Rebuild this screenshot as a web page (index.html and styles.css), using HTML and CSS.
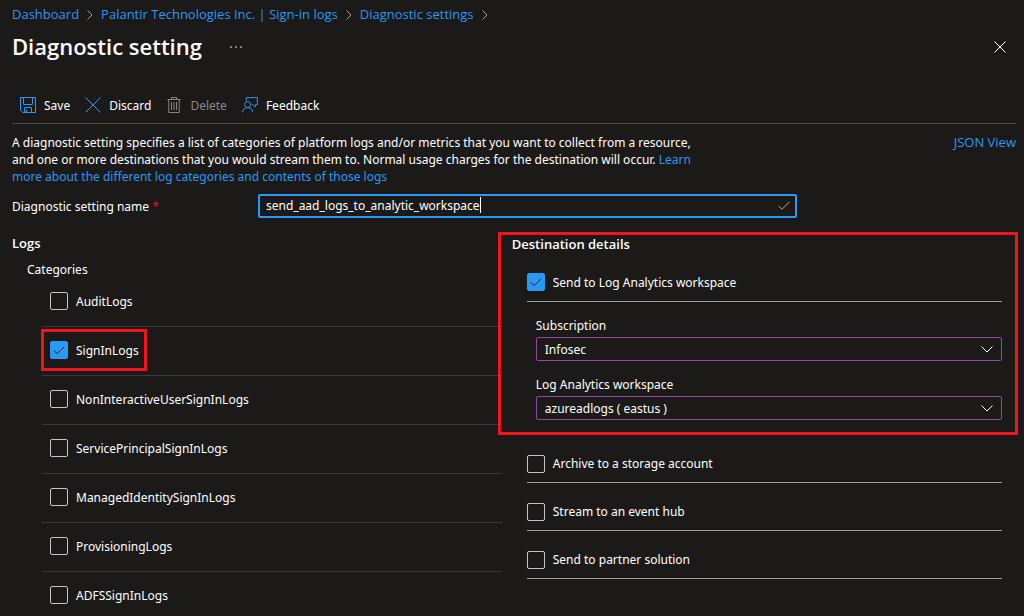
FILE: index.html
```html
<!DOCTYPE html>
<html lang="en">
<head>
  <meta charset="UTF-8">
  <title>Diagnostic setting</title>
  <link rel="stylesheet" href="styles.css">
</head>
<body>

  <nav class="breadcrumb" aria-label="Breadcrumb">
    <a href="#">Dashboard</a>
    <svg class="crumb-arrow" viewBox="0 0 6 10"><path d="M0.5 0.5 5 5 0.5 9.5"/></svg>
    <a href="#">Palantir Technologies Inc. | Sign-in logs</a>
    <svg class="crumb-arrow" viewBox="0 0 6 10"><path d="M0.5 0.5 5 5 0.5 9.5"/></svg>
    <a href="#">Diagnostic settings</a>
    <svg class="crumb-arrow" viewBox="0 0 6 10"><path d="M0.5 0.5 5 5 0.5 9.5"/></svg>
  </nav>

  <header class="title-bar">
    <h1>Diagnostic setting</h1>
    <button type="button" class="icon-button" aria-label="More">
      <svg class="more-icon" viewBox="0 0 12 4"><circle cx="1" cy="2" r="0.8"/><circle cx="6" cy="2" r="0.8"/><circle cx="11" cy="2" r="0.8"/></svg>
    </button>
    <button type="button" class="icon-button close" aria-label="Close">
      <svg class="close-icon" viewBox="0 0 12 12"><path d="M0.5 0.5 11.5 11.5M11.5 0.5 0.5 11.5"/></svg>
    </button>
  </header>

  <div class="toolbar">
    <button type="button">
      <svg class="tool-icon" viewBox="0 0 16 16"><path d="M0.5 0.5H15.5V15.5H2.8L0.5 13.2ZM3.5 0.5V7.5H12.5V0.5M4.5 15.5V10.5H11.5V15.5M6.5 12.5V15.5"/></svg>
      Save
    </button>
    <button type="button">
      <svg class="tool-icon" viewBox="0 0 16 16"><path d="M0.5 0.5 15.5 15.5M15.5 0.5 0.5 15.5"/></svg>
      Discard
    </button>
    <button type="button" disabled>
      <svg class="tool-icon" viewBox="0 0 16 16"><path d="M1.5 2.5H14.5M5.5 2.5V0.5H10.5V2.5M2.8 2.5V15.5H13.2V2.5M5.5 5V13M8 5V13M10.5 5V13"/></svg>
      Delete
    </button>
    <button type="button">
      <svg class="tool-icon" viewBox="0 0 16 16"><path d="M4.2 3.6V0.6H15.4V7.6H13.4V10L11 7.6H10M0.6 15.4C0.8 12.4 2.9 10.6 5.6 10.6S10.4 12.4 10.6 15.4"/><circle cx="5.6" cy="7.6" r="3"/></svg>
      Feedback
    </button>
  </div>

  <main>
    <div class="intro">
      <p>A diagnostic setting specifies a list of categories of platform logs and/or metrics that you want to collect from a resource, and one or more destinations that you would stream them to. Normal usage charges for the destination will occur. <a href="#">Learn more about the different log categories and contents of those logs</a></p>
      <a href="#" class="json-link">JSON View</a>
    </div>

    <div class="name-row">
      <label for="setting-name">Diagnostic setting name <span class="required">*</span></label>
      <div class="name-field">
        <input type="text" id="setting-name" value="send_aad_logs_to_analytic_workspace">
        <span class="caret"></span>
        <svg class="valid-icon" viewBox="0 0 12 9"><path d="M0.5 5 4 8.3 11.5 0.7"/></svg>
      </div>
    </div>

    <div class="columns">
      <section class="logs">
        <h2>Logs</h2>
        <h3>Categories</h3>
        <ul class="categories">
          <li><label><input type="checkbox">AuditLogs</label></li>
          <li><label class="highlight"><input type="checkbox" checked>SignInLogs</label></li>
          <li><label><input type="checkbox">NonInteractiveUserSignInLogs</label></li>
          <li><label><input type="checkbox">ServicePrincipalSignInLogs</label></li>
          <li><label><input type="checkbox">ManagedIdentitySignInLogs</label></li>
          <li><label><input type="checkbox">ProvisioningLogs</label></li>
          <li><label><input type="checkbox">ADFSSignInLogs</label></li>
        </ul>
      </section>

      <section class="destinations">
        <div class="panel">
          <h2>Destination details</h2>
          <div class="option"><label><input type="checkbox" checked>Send to Log Analytics workspace</label></div>
          <div class="workspace">
            <label for="subscription">Subscription</label>
            <div class="select-box">
              <select id="subscription">
                <option>Infosec</option>
              </select>
              <svg class="chevron" viewBox="0 0 12 7"><path d="M0.5 0.5 6 6 11.5 0.5"/></svg>
            </div>
            <label for="workspace">Log Analytics workspace</label>
            <div class="select-box">
              <select id="workspace">
                <option>azureadlogs ( eastus )</option>
              </select>
              <svg class="chevron" viewBox="0 0 12 7"><path d="M0.5 0.5 6 6 11.5 0.5"/></svg>
            </div>
          </div>
        </div>
        <div class="other-options">
          <div class="option"><label><input type="checkbox">Archive to a storage account</label></div>
          <div class="option"><label><input type="checkbox">Stream to an event hub</label></div>
          <div class="option"><label><input type="checkbox">Send to partner solution</label></div>
        </div>
      </section>
    </div>
  </main>

</body>
</html>
```
FILE: styles.css
```css
* {
  box-sizing: border-box;
}
html {
  background-color: #1b1a19;
}
body {
  margin: 0;
  font-family: "Noto Sans", "Open Sans", sans-serif;
  font-size: 12px;
  line-height: 17px;
  color: #fff;
  overflow: hidden;
}
a {
  color: #2899f5;
  text-decoration: none;
}
a:hover {
  text-decoration: underline;
}
h1, h2, h3, p, ul {
  margin: 0;
  padding: 0;
}
h1, h2, .breadcrumb, .json-link {
  font-family: "Open Sans", "Noto Sans", sans-serif;
}
button, input, select {
  font: inherit;
  color: inherit;
  background: none;
  border: none;
  padding: 0;
  margin: 0;
}
svg {
  fill: none;
  stroke: currentColor;
  flex: none;
}
.breadcrumb {
  display: flex;
  align-items: center;
  gap: 8px;
  height: 29px;
  padding: 0 12px;
  font-size: 13px;
}
.crumb-arrow {
  width: 6px;
  height: 10px;
  color: #a19f9d;
}
.title-bar {
  display: flex;
  align-items: center;
  height: 36px;
  padding: 0 18px 0 12px;
}
h1 {
  font-size: 22px;
  line-height: 32px;
  font-weight: 600;
  padding-bottom: 2px;
}
.icon-button {
  display: flex;
  cursor: pointer;
}
.more-icon {
  width: 12px;
  height: 4px;
  margin-left: 28px;
  fill: #fff;
  stroke: none;
}
.close {
  margin-left: auto;
}
.close-icon {
  width: 12px;
  height: 12px;
}
.toolbar {
  display: flex;
  align-items: center;
  gap: 15px;
  height: 37px;
  margin: 22px 8px 0 12px;
  padding: 0 8px;
  border-bottom: 1px solid #484644;
}
.toolbar button {
  display: flex;
  align-items: center;
  gap: 8px;
  cursor: pointer;
}
.toolbar button:disabled {
  color: #8a8886;
  cursor: default;
}
.tool-icon {
  width: 16px;
  height: 16px;
  color: #2899f5;
}
button:disabled .tool-icon {
  color: #8a8886;
}
main {
  padding: 10px 6px 0 12px;
}
.intro {
  display: flex;
  justify-content: space-between;
  padding-right: 2px;
}
.intro p {
  max-width: 690px;
}
.json-link {
  font-size: 13px;
}
.name-row {
  display: flex;
  align-items: center;
  margin-top: 9px;
}
.name-row label {
  width: 246px;
}
.required {
  color: #e81123;
}
.name-field {
  display: flex;
  align-items: center;
  width: 539px;
  height: 24px;
  padding: 0 5px 2px 6px;
  border: 2px solid #2899f5;
  border-radius: 2px;
}
.name-field input {
  field-sizing: content;
  outline: none;
}
.caret {
  width: 1px;
  height: 16px;
  background-color: #fff;
}
.valid-icon {
  width: 12px;
  height: 9px;
  margin-left: auto;
  color: #92c353;
}
.columns {
  display: grid;
  grid-template-columns: 15fr 16fr;
  margin-top: 14px;
}
h2 {
  font-size: 13px;
  font-weight: 600;
}
h3 {
  font-size: 12px;
  font-weight: 400;
}
.logs h2 {
  margin-top: 3px;
}
.logs h3 {
  margin: 9px 0 0 15px;
}
.categories {
  list-style: none;
  margin: 0 -3px 0 30px;
}
.categories li {
  display: flex;
  align-items: center;
  height: 49px;
  padding: 0 0 2px 8px;
  border-bottom: 1px solid #3b3a39;
}
.categories label, .option label {
  display: flex;
  align-items: center;
  gap: 8px;
}
.highlight {
  margin-left: -9px;
  padding: 9px 5px 9px 6px;
  border: 3px solid #f3131c;
}
input[type="checkbox"] {
  appearance: none;
  width: 18px;
  height: 18px;
  border: 1px solid #c8c6c4;
  border-radius: 2px;
}
input[type="checkbox"]:checked {
  border-color: #2899f5;
  background: #2899f5 url("data:image/svg+xml,%3Csvg xmlns='http://www.w3.org/2000/svg' viewBox='0 0 16 16' fill='none' stroke='%231b1a19'%3E%3Cpath d='M3 8.5 6.2 11.7 13 4.8'/%3E%3C/svg%3E");
}
.panel {
  margin-left: -1px;
  padding: 1px 13px 12px 11px;
  border: 3px solid #f3131c;
}
.option {
  display: flex;
  align-items: center;
  height: 48px;
  padding-top: 10px;
  border-bottom: 1px solid #a19f9d;
}
.panel .option {
  height: 49px;
  margin-left: 15px;
}
.workspace {
  margin: 15px 0 0 24px;
}
.workspace label {
  display: block;
  margin-bottom: 3px;
}
.select-box {
  display: grid;
  align-items: center;
  margin-bottom: 15px;
}
.select-box:last-child {
  margin-bottom: 0;
}
.select-box > * {
  grid-area: 1 / 1;
}
.select-box select {
  appearance: none;
  width: 100%;
  height: 24px;
  padding: 0 8px;
  border: 1px solid #8f49a5;
  border-radius: 2px;
}
.select-box option {
  background-color: #1b1a19;
}
.chevron {
  width: 12px;
  height: 7px;
  margin-right: 9px;
  justify-self: end;
  pointer-events: none;
}
.other-options {
  margin: 0 16px 0 28px;
}
```
